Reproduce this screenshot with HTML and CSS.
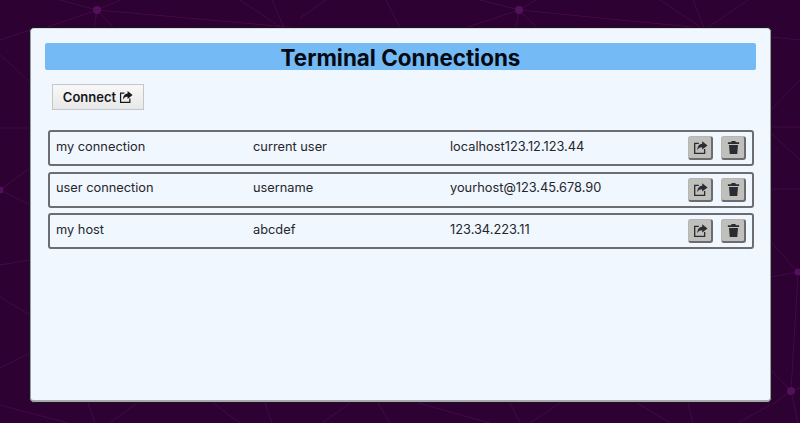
FILE: index.html
```html
<!DOCTYPE html>
<html lang="en">
<head>
<meta charset="utf-8">
<title>Terminal Connections</title>
<link rel="stylesheet" href="styles.css">
</head>
<body>
<svg class="bg-net" width="800" height="423" viewBox="0 0 800 423" aria-hidden="true">
  <g class="bg-lines">
    <path d="M97 10L30 33M0 40L30 30M97 10L60 0M97 10L120 0M97 10L94 28M97 10L114 28M97 10L300 28M240 0L282 28M272 0L284 28M326 0L300 18M386 0L400 28M519 10L480 0M519 10L536 0M519 10L465 28M519 10L516 28M519 10L537 28M519 10L702 28M660 0L702 28M693 0L704 28M748 0L707 28"/>
    <path d="M771 37L800 40M771 110L800 80M771 127L800 127M771 133L800 160M771 189L800 189M771 242L798 272M771 277L798 272M798 272L791 391M771 370L791 391M791 391L772 405M791 391L800 388M791 391L798 423"/>
    <path d="M0 55L30 82M0 128L30 128M0 190L30 168M0 190L30 205M0 265L30 260M0 297L30 315M0 368L30 353M0 405L30 413"/>
    <path d="M30 413L68 423M88 403L95 423M137 403L110 423M213 403L240 423M265 403L272 423M350 403L322 423M378 403L390 423M418 403L490 423M510 403L520 423M560 403L530 423M637 403L670 423M688 403L693 423M770 405L738 423"/>
  </g>
  <g class="bg-nodes">
    <circle cx="97" cy="10" r="4"/>
    <circle cx="519" cy="10" r="4"/>
    <circle cx="791" cy="391" r="4"/>
    <circle cx="798" cy="272" r="3.5"/>
    <circle cx="0" cy="190" r="3.5"/>
  </g>
</svg>
<main class="panel">
  <h1 class="title">Terminal Connections</h1>
  <div class="toolbar">
    <button class="connect" type="button">Connect
      <svg class="icon" viewBox="0 0 16 16"><use href="#share"/></svg>
    </button>
  </div>
  <ul class="list">
    <li class="row">
      <span class="cell">my connection</span>
      <span class="cell">current user</span>
      <span class="cell">localhost123.12.123.44</span>
      <span class="actions">
        <button class="act" type="button"><svg class="icon" viewBox="0 0 16 16"><use href="#share"/></svg></button>
        <button class="act" type="button"><svg class="icon" viewBox="0 0 16 16"><use href="#trash"/></svg></button>
      </span>
    </li>
    <li class="row">
      <span class="cell">user connection</span>
      <span class="cell">username</span>
      <span class="cell">yourhost@123.45.678.90</span>
      <span class="actions">
        <button class="act" type="button"><svg class="icon" viewBox="0 0 16 16"><use href="#share"/></svg></button>
        <button class="act" type="button"><svg class="icon" viewBox="0 0 16 16"><use href="#trash"/></svg></button>
      </span>
    </li>
    <li class="row">
      <span class="cell">my host</span>
      <span class="cell">abcdef</span>
      <span class="cell">123.34.223.11</span>
      <span class="actions">
        <button class="act" type="button"><svg class="icon" viewBox="0 0 16 16"><use href="#share"/></svg></button>
        <button class="act" type="button"><svg class="icon" viewBox="0 0 16 16"><use href="#trash"/></svg></button>
      </span>
    </li>
  </ul>
</main>
<svg class="defs" width="0" height="0" aria-hidden="true">
  <defs>
    <symbol id="share" viewBox="0 0 16 16">
      <path fill="none" stroke="currentColor" stroke-width="1.4" d="M6.2 3.6H1.8V14.2H12.4V9.6"/>
      <path fill="currentColor" d="M9.8 1.2L15.5 5.8L9.8 10.2V7.6C7.6 7.6 5.8 8.2 4.6 10.8C4.6 6.8 6.8 4.2 9.8 4Z"/>
    </symbol>
    <symbol id="trash" viewBox="0 0 16 16">
      <path fill="currentColor" d="M6 1H10L10.5 2.4H14V4.2H2V2.4H5.5ZM3.2 5.2H12.8L12 15H4Z"/>
    </symbol>
  </defs>
</svg>
</body>
</html>
```
FILE: styles.css
```css
* { box-sizing: border-box; }
html, body { height: 100%; }
body {
  margin: 0;
  padding: 27px 28px 20px 29px;
  background: #2d0131;
  font-family: Inter, "Liberation Sans", sans-serif;
  color: #26262a;
  overflow: hidden;
}
.bg-net { position: fixed; left: 0; top: 0; }
.bg-lines path { fill: none; stroke: #430a49; stroke-width: 1; }
.bg-nodes circle { fill: #52105a; }
.defs { position: absolute; }
.panel {
  position: relative;
  height: 100%;
  padding: 15px 15px 0;
  background: #f0f7ff;
  border: 1px solid #1b1420;
  border-radius: 5px;
  box-shadow:
    inset 0 1px 0 #d9dadb,
    inset 1px 0 0 #9b9b9e,
    inset -1px 0 0 #9b9b9e,
    inset 0 -2px 0 #a9a9ac;
}
.title {
  margin: 0;
  height: 27px;
  background: #74bbf6;
  border-radius: 2px;
  color: #050a12;
  font-size: 22.4px;
  font-weight: 700;
  line-height: 29px;
  text-align: center;
}
.toolbar { padding: 14px 0 0 7px; }
.connect {
  display: flex;
  align-items: center;
  justify-content: center;
  gap: 3px;
  width: 92px;
  height: 26px;
  padding: 0;
  background: linear-gradient(#f8f8f8, #e8e8e8);
  border: 1px solid #c6c6c6;
  color: #18181a;
  font-family: inherit;
  font-size: 13px;
  font-weight: 600;
}
.connect .icon { width: 14px; height: 14px; }
.list {
  list-style: none;
  margin: 20px 0 0;
  padding: 0 2px 0 3px;
  display: flex;
  flex-direction: column;
  gap: 5.5px;
}
.row {
  display: flex;
  align-items: center;
  height: 36px;
  padding: 0 6px;
  border: 2px solid #6b6d70;
  border-radius: 3px;
  font-size: 12.8px;
}
.cell { flex: 0 0 197px; padding-bottom: 4px; }
.actions { margin-left: auto; display: flex; gap: 8px; }
.act {
  display: flex;
  align-items: center;
  justify-content: center;
  width: 25px;
  height: 24px;
  padding: 0;
  background: #bfbfbc;
  border: 1px solid #b6b6b3;
  border-right: 2px solid #6c6c6e;
  border-bottom: 2px solid #6c6c6e;
  border-radius: 3px;
  color: #2a2c32;
}
.act .icon { width: 15px; height: 15px; }
```
